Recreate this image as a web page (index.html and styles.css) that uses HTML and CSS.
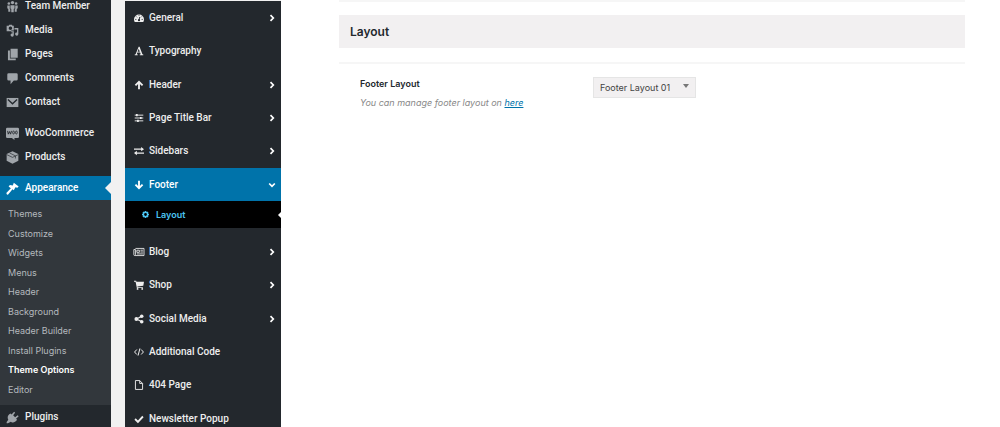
FILE: index.html
```html
<!DOCTYPE html>
<html lang="en">
<head>
<meta charset="utf-8">
<title>Theme Options</title>
<link rel="stylesheet" href="styles.css">
</head>
<body>
<svg class="sprite" aria-hidden="true">
  <symbol id="chev" viewBox="0 0 8 8"><path d="M2.5 1.2 5.3 4 2.5 6.8" fill="none" stroke="currentColor" stroke-width="1.7"/></symbol>
</svg>
<div class="app">
  <nav class="admin" aria-label="Admin menu">
    <ul class="menu">
      <li><a class="item" href="#"><svg class="ico" viewBox="0 0 20 20"><g fill="currentColor"><circle cx="10" cy="4" r="2.6"/><circle cx="4.4" cy="5.4" r="2"/><circle cx="15.6" cy="5.4" r="2"/><path d="M6.8 8h6.400v5l-1.300 1v5H8.100v-5l-1.300-1zM2 8.500h3.800v5.500l.8.600V18H3.500v-4L2 12.500zM18 8.500h-3.800v5.500l-.8.600V18h3.100v-4l1.500-1.500z"/></g></svg>Team Member</a></li>
      <li><a class="item" href="#"><svg class="ico" viewBox="0 0 20 20"><path fill="currentColor" fill-rule="evenodd" d="M2 2.500h2l1-1.500h4l1 1.500h2V11H1V2.500zM6.800 4a2.700 2.700 0 1 0 0 5.400 2.700 2.700 0 0 0 0-5.400zM13 6h6v9.500a2.500 2.500 0 1 1-2-2.450V8.500h-4zM12 10v7a2.500 2.500 0 1 1-2-2.450V12.500H8V10z"/></svg>Media</a></li>
      <li><a class="item" href="#"><svg class="ico" viewBox="0 0 20 20"><path fill="currentColor" d="M7 1h11v14H7zM3 4h3v12h9v3H3z"/></svg>Pages</a></li>
      <li><a class="item" href="#"><svg class="ico" viewBox="0 0 20 20"><path fill="currentColor" d="M4 2h12q2 0 2 2v7q0 2-2 2h-4l-5 6v-6H4q-2 0-2-2V4q0-2 2-2z"/></svg>Comments</a></li>
      <li><a class="item" href="#"><svg class="ico" viewBox="0 0 20 20"><path fill="currentColor" d="M1 3h18v14H1z"/><path d="m3 5.500 7 6.500 7-6.500" fill="none" stroke="#23282d" stroke-width="2"/></svg>Contact</a></li>
      <li class="gap"><a class="item" href="#"><svg class="ico" viewBox="0 0 20 20"><path fill="currentColor" d="M2 1h16q2 0 2 2v12q0 2-2 2h-5v3l-4-3H2q-2 0-2-2V3q0-2 2-2z"/><path d="m2.500 6 1 5 2-4 1.500 4 1.500-5" fill="none" stroke="#23282d" stroke-width="1.400"/><ellipse cx="11.600" cy="8.500" rx="1.400" ry="2.200" fill="none" stroke="#23282d" stroke-width="1.300"/><ellipse cx="16" cy="8.500" rx="1.400" ry="2.200" fill="none" stroke="#23282d" stroke-width="1.300"/></svg>WooCommerce</a></li>
      <li><a class="item" href="#"><svg class="ico" viewBox="0 0 20 20"><path fill="currentColor" d="m10 .5 9 4v10.500l-9 4.500-9-4.500V4.500z"/><path d="m1 5.500 9 4.300 9-4.300M5.500 3l9 4.500v4" fill="none" stroke="#23282d" stroke-width="1"/></svg>Products</a></li>
      <li class="gap"><a class="item current" href="#" aria-current="true"><svg class="ico" viewBox="0 0 20 20"><path fill="currentColor" d="m12 1 7.500 6-2 2-3-1-2.500 4.500-2-1.500-7 8.500Q1 20 .5 17l7-7.500L4 7l2-2.500 4.500 1z"/></svg>Appearance</a>
        <ul class="submenu">
          <li><a href="#">Themes</a></li>
          <li><a href="#">Customize</a></li>
          <li><a href="#">Widgets</a></li>
          <li><a href="#">Menus</a></li>
          <li><a href="#">Header</a></li>
          <li><a href="#">Background</a></li>
          <li><a href="#">Header Builder</a></li>
          <li><a href="#">Install Plugins</a></li>
          <li><a class="on" href="#">Theme Options</a></li>
          <li><a href="#">Editor</a></li>
        </ul>
      </li>
      <li><a class="item" href="#"><svg class="ico" viewBox="0 0 20 20"><path fill="currentColor" d="m12.500 1 1.500 1.500-3 4 3 3 4-3 1.500 1.500-4 4 1.500 1.500-1.500 2q-4 4-8 1L3 19H1v-2l2.500-3.500Q1 8.500 5 5l2-1 1.500 1.500z"/></svg>Plugins</a></li>
    </ul>
  </nav>

  <nav class="options" aria-label="Theme options">
    <ul class="sections">
      <li><a class="section" href="#"><svg class="glyph" viewBox="0 0 14 14"><path fill="currentColor" d="M0 9a7 7 0 0 1 14 0q0 2-1 3.500H1Q0 11 0 9z"/><path d="m7 10.500 1-5M1.800 9h1.500M10.700 9h1.500M3.200 5l1 1M7 2.800v1M10.800 5l-1 1" stroke="#23282d" stroke-width="1.300"/><circle cx="7" cy="10" r="1.500" fill="#23282d"/></svg>General<svg class="chev"><use href="#chev"/></svg></a></li>
      <li><a class="section" href="#"><svg class="glyph" viewBox="0 0 14 14"><path fill="currentColor" fill-rule="evenodd" d="M6.500 1h1.300l4 10.500 1.200.500v1H8v-1l1.400-.5-.8-2.300H4.700l-.8 2.300 1.400.5v1H1v-1l1.200-.5zM5.100 8h3L6.600 4z"/></svg>Typography</a></li>
      <li><a class="section" href="#"><svg class="glyph" viewBox="0 0 14 14"><path d="M7 13V3M2 7.500l5-5 5 5" fill="none" stroke="currentColor" stroke-width="2.600"/></svg>Header<svg class="chev"><use href="#chev"/></svg></a></li>
      <li><a class="section" href="#"><svg class="glyph" viewBox="0 0 14 14"><path d="M1 3h12M1 7h12M1 11h12" stroke="currentColor" stroke-width="1.300"/><path d="M4 1.500v3M9.500 5.500v3M5.500 9.500v3" stroke="currentColor" stroke-width="2.400"/></svg>Page Title Bar<svg class="chev"><use href="#chev"/></svg></a></li>
      <li><a class="section" href="#"><svg class="glyph" viewBox="0 0 14 14"><path fill="currentColor" d="M0 3.500h10V1.300L14 4.400 10 7.500V5.300H0zM14 9H4V6.800L0 9.900 4 13v-2.200h10z"/></svg>Sidebars<svg class="chev"><use href="#chev"/></svg></a></li>
      <li><a class="section open" href="#" aria-expanded="true"><svg class="glyph" viewBox="0 0 14 14"><path d="M7 1v10M2 6.500l5 5 5-5" fill="none" stroke="currentColor" stroke-width="2.600"/></svg>Footer<svg class="chev down"><use href="#chev"/></svg></a></li>
    </ul>
    <a class="child" href="#" aria-current="page"><svg class="gear" viewBox="0 0 14 14"><circle cx="7" cy="7" r="4.300" fill="none" stroke="currentColor" stroke-width="3"/><path d="M7 0v2M7 12v2M0 7h2M12 7h2M2 2l2 2M10 10l2 2M12 2l-2 2M4 10l-2 2" stroke="currentColor" stroke-width="3"/></svg>Layout</a>
    <ul class="sections after">
      <li><a class="section" href="#"><svg class="glyph wide" viewBox="0 0 16 14"><g fill="none" stroke="currentColor" stroke-width="1.200"><path d="M3 2h12v10H2Q.8 12 .8 10.800V3.500H3V11"/><path d="M5 4.500H8.500V7.500H5zM10 4.500h3.500M10 7h3.500M5 9.700H13.500"/></g></svg>Blog<svg class="chev"><use href="#chev"/></svg></a></li>
      <li><a class="section" href="#"><svg class="glyph" viewBox="0 0 14 14"><path fill="currentColor" d="M0 1h3l.4 1.500H14L13 8 4.800 9l.2 1h7.500v1.200H4L2.200 2.300H0z"/><circle cx="5" cy="12.500" r="1.300" fill="currentColor"/><circle cx="11.500" cy="12.500" r="1.300" fill="currentColor"/></svg>Shop<svg class="chev"><use href="#chev"/></svg></a></li>
      <li><a class="section" href="#"><svg class="glyph" viewBox="0 0 14 14"><path d="M11 3 3.500 7l7.500 4" fill="none" stroke="currentColor" stroke-width="1.600"/><g fill="currentColor"><circle cx="10.800" cy="3.200" r="2.500"/><circle cx="3.300" cy="7" r="2.700"/><circle cx="10.800" cy="10.800" r="2.500"/></g></svg>Social Media<svg class="chev"><use href="#chev"/></svg></a></li>
      <li><a class="section" href="#"><svg class="glyph" viewBox="0 0 14 14"><path d="M4 3.500.8 7 4 10.500M10 3.500 13.200 7 10 10.500M8.300 2 5.700 12" fill="none" stroke="currentColor" stroke-width="1.400"/></svg>Additional Code</a></li>
      <li><a class="section" href="#"><svg class="glyph" viewBox="0 0 14 14"><path d="M2 .8h6L12 4.800v8.400H2zM8 .8v4h4" fill="none" stroke="currentColor" stroke-width="1.300"/></svg>404 Page</a></li>
      <li><a class="section" href="#"><svg class="glyph" viewBox="0 0 14 14"><path d="m1.500 7 4 4 7-7.500" fill="none" stroke="currentColor" stroke-width="2.600"/></svg>Newsletter Popup</a></li>
    </ul>
  </nav>

  <main class="panel">
    <h2 class="heading">Layout</h2>
    <div class="field">
      <div class="info">
        <label class="label" for="footer-layout">Footer Layout</label>
        <p class="hint">You can manage footer layout on <a href="#">here</a></p>
      </div>
      <div class="picker">
        <select id="footer-layout"><option>Footer Layout 01</option></select>
      </div>
    </div>
  </main>
</div>
</body>
</html>
```
FILE: styles.css
```css
* { box-sizing: border-box; }

body {
  margin: 0;
  background: #fff;
  color: #23282d;
  font-family: Inter, Roboto, sans-serif;
  font-size: 9px;
  line-height: 16px;
}

ul { list-style: none; margin: 0; padding: 0; }

.sprite { display: none; }

.app {
  display: flex;
  height: 100vh;
  overflow: hidden;
  background: #f1f1f1;
}

.admin {
  flex: 0 0 111px;
  background: #23282d;
}

.menu { margin-top: -6px; }

.gap { margin-top: 7px; }

.item,
.section {
  display: flex;
  align-items: center;
  color: #eee;
  font-family: Roboto, Inter, sans-serif;
  font-size: 10px;
  font-weight: 500;
  text-decoration: none;
}

.item {
  gap: 6px;
  height: 24px;
  padding-left: 6px;
}

.ico {
  flex: none;
  width: 13px;
  height: 13px;
  color: #a0a5aa;
}

.current {
  position: relative;
  background: #0073aa;
  color: #fff;
}

.current .ico { color: #fff; }

.current::after,
.child::after {
  content: "";
  position: absolute;
  right: 0;
  top: 50%;
  transform: translateY(-50%);
  border: 6px solid transparent;
  border-right-color: #f1f1f1;
  border-left-width: 0;
}

.submenu {
  display: grid;
  grid-auto-rows: 1fr;
  min-height: 205px;
  padding: 5px 0;
  background: #32373c;
}

.submenu a {
  display: block;
  padding: 1px 8px;
  color: #b4b9be;
  text-decoration: none;
}

.submenu .on {
  color: #fff;
  font-weight: 600;
}

.options {
  flex: 0 0 156px;
  margin: 1px 0 0 14px;
  background: #23282d;
}

.sections {
  display: grid;
  grid-auto-rows: 1fr;
  min-height: 200px;
}

.after { margin-top: 7px; }

.section {
  gap: 5px;
  height: 100%;
  padding: 1px 5px 0 9px;
}

.glyph {
  flex: none;
  width: 10px;
  height: 10px;
}

.wide {
  width: 12px;
  margin: 0 -1px;
}

.chev {
  width: 8px;
  height: 8px;
  margin-left: auto;
  color: #fff;
}

.down { transform: rotate(90deg); }

.open {
  background: #0073aa;
  color: #fff;
}

.child {
  position: relative;
  display: flex;
  align-items: center;
  gap: 7px;
  height: 27px;
  padding-left: 17px;
  background: #000;
  color: #4cc3f0;
  font-weight: 600;
  text-decoration: none;
}

.gear {
  width: 7px;
  height: 7px;
}

.child::after {
  border-width: 3px 3px 3px 0;
  border-right-color: #fff;
}

.panel {
  flex: 1;
  padding: 0 35px 0 58px;
  background: #fff;
}

.heading {
  margin: 0;
  padding: 8px 11px;
  background: #f2f0f1;
  font-size: 12px;
  font-weight: 600;
  line-height: 17px;
}

.panel::before {
  content: "";
  display: block;
  height: 2px;
  margin-bottom: 13px;
  background: #f6f6f6;
}

.field {
  display: flex;
  margin-top: 14px;
  padding: 13px 21px;
  border-top: 2px solid #f6f6f6;
}

.info { flex: 0 0 233px; }

.label {
  display: block;
  font-weight: 600;
  line-height: 14px;
}

.hint {
  margin: 4px 0 0;
  color: #888;
  font-style: italic;
}

.hint a { color: #0073aa; }

.picker {
  position: relative;
  align-self: flex-start;
}

.picker select {
  display: block;
  appearance: none;
  width: 103px;
  height: 21px;
  padding: 0 6px;
  border: 1px solid #e5e5e5;
  border-radius: 0;
  background: #f2f0f1;
  color: #444;
  font: inherit;
}

.picker::after {
  content: "";
  position: absolute;
  top: 7px;
  right: 7px;
  border: 3px solid transparent;
  border-top: 4px solid #777;
  border-bottom-width: 0;
  pointer-events: none;
}
```
